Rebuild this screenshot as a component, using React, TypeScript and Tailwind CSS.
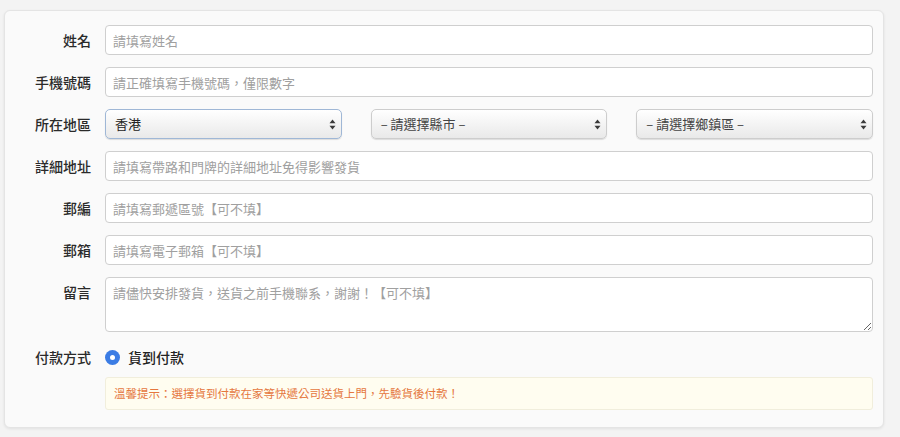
import React from 'react'

const font = { fontFamily: '"Noto Sans CJK TC", "Noto Sans", sans-serif' }

function Row({ label, children, align = 'center' }: { label: string; children: React.ReactNode; align?: 'center' | 'start' }) {
  return (
    <div className={`flex ${align === 'center' ? 'items-center' : 'items-start'}`}>
      <div className={`w-[86px] shrink-0 text-right text-[14px] font-medium text-[#2a2a2a] ${align === 'start' ? 'pt-[5px]' : ''}`}>
        {label}
      </div>
      <div className="ml-[14px] flex-1">{children}</div>
    </div>
  )
}

function TextInput({ placeholder }: { placeholder: string }) {
  return (
    <input
      type="text"
      placeholder={placeholder}
      className="h-[30px] w-full rounded-[4px] border border-[#cfcfcf] bg-white px-[7px] text-[13px] text-[#333] outline-none placeholder:text-[#a0a0a0]"
      style={font}
    />
  )
}

function Arrows() {
  return (
    <svg width="7" height="11" viewBox="0 0 7 11" className="shrink-0">
      <path d="M3.5 0.5 L6.5 4.3 H0.5 Z" fill="#3a3a3a" />
      <path d="M3.5 10.5 L6.5 6.7 H0.5 Z" fill="#3a3a3a" />
    </svg>
  )
}

function SelectBox({ text, focused, dim }: { text: string; focused?: boolean; dim?: boolean }) {
  return (
    <div
      className={`flex h-[30px] items-center justify-between rounded-[5px] border bg-gradient-to-b from-white to-[#e9e9e9] pl-[9px] pr-[5px] shadow-[0_1px_1px_rgba(0,0,0,0.12)] ${
        focused ? 'border-[#9fb7d6] shadow-[0_0_0_1px_#d6e2f1]' : 'border-[#cdcdcd]'
      }`}
    >
      <span className={`text-[13px] ${dim ? 'text-[#444]' : 'text-[#222]'}`}>{text}</span>
      <Arrows />
    </div>
  )
}

export default function App() {
  return (
    <div className="h-[437px] w-[900px] bg-[#f3f3f3] pl-[4px] pt-[10px]" style={font}>
      <div className="h-[418px] w-[880px] rounded-[6px] border border-[#e4e4e4] bg-[#fafafa] pb-[20px] pl-0 pr-[10px] pt-[14px] shadow-[0_1px_3px_rgba(0,0,0,0.08)]">
        <div className="flex flex-col gap-[12px]">
          <Row label="姓名">
            <TextInput placeholder="請填寫姓名" />
          </Row>
          <Row label="手機號碼">
            <TextInput placeholder="請正確填寫手機號碼，僅限數字" />
          </Row>
          <Row label="所在地區">
            <div className="grid grid-cols-3 gap-[29px]">
              <SelectBox text="香港" focused />
              <SelectBox text="– 請選擇縣市 –" dim />
              <SelectBox text="– 請選擇鄉鎮區 –" dim />
            </div>
          </Row>
          <Row label="詳細地址">
            <TextInput placeholder="請填寫帶路和門牌的詳細地址免得影響發貨" />
          </Row>
          <Row label="郵編">
            <TextInput placeholder="請填寫郵遞區號【可不填】" />
          </Row>
          <Row label="郵箱">
            <TextInput placeholder="請填寫電子郵箱【可不填】" />
          </Row>
          <Row label="留言" align="start">
            <textarea
              placeholder="請儘快安排發貨，送貨之前手機聯系，謝謝！【可不填】"
              className="block h-[55px] w-full rounded-[4px] border border-[#cfcfcf] bg-white px-[7px] py-[5px] text-[13px] text-[#333] outline-none placeholder:text-[#a0a0a0]"
              style={font}
            />
          </Row>
          <div className="mt-[3px]">
            <Row label="付款方式">
              <div className="flex items-center">
                <span className="flex h-[15px] w-[15px] items-center justify-center rounded-full bg-[#3b7ce4]">
                  <span className="h-[5px] w-[5px] rounded-full bg-white" />
                </span>
                <span className="ml-[8px] text-[14px] font-medium text-[#222]">貨到付款</span>
              </div>
            </Row>
          </div>
          <div className="-mt-[3px] ml-[100px] flex h-[33px] items-center rounded-[3px] border border-[#f1eedc] bg-[#fffdf0] px-[8px] text-[11.5px] text-[#e5773e]">
            溫馨提示：選擇貨到付款在家等快遞公司送貨上門，先驗貨後付款！
          </div>
        </div>
      </div>
    </div>
  )
}
